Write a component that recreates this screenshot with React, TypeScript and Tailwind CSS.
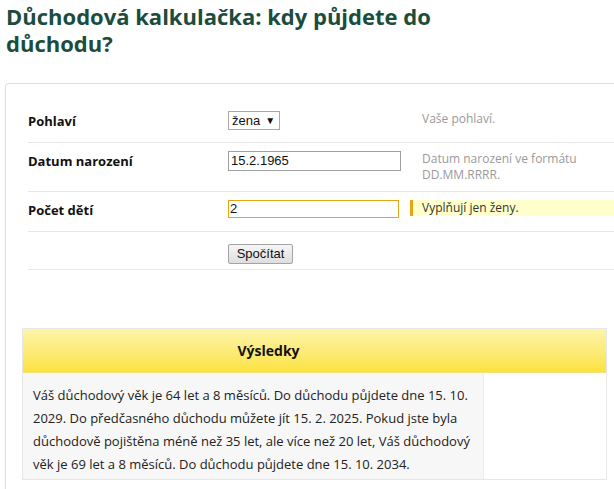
const sans = "font-['Open_Sans','Liberation_Sans',sans-serif]";
const arial = "font-['Liberation_Sans',Arial,sans-serif]";

function Row({
  label,
  children,
  help,
  highlight,
  className,
}: {
  label?: string;
  children: React.ReactNode;
  help?: React.ReactNode;
  highlight?: boolean;
  className: string;
}) {
  return (
    <div className={["grid grid-cols-[200px_182px_1fr] border-b border-[#e6e6e6]", className].join(" ")}>
      <div className="text-[13px] font-bold leading-[20px] text-[#111]">{label}</div>
      <div>{children}</div>
      <div>
        {help && (
          <div
            className={[
              "border-l-[3px] pl-[9px] text-[12px] leading-[16px]",
              highlight ? "border-[#e8a317] bg-[#ffffcc] text-[#333]" : "border-transparent text-[#9a9a9a]",
            ].join(" ")}
          >
            {help}
          </div>
        )}
      </div>
    </div>
  );
}

export default function App() {
  return (
    <div className={["h-[489px] w-[614px] overflow-hidden bg-white", sans].join(" ")}>
      <h1 className="px-[6px] pt-[3px] text-[22px] font-bold leading-[27px] text-[#1b4d3e]">
        Důchodová kalkulačka: kdy půjdete do
        <br />
        důchodu?
      </h1>

      <div className="ml-[5px] mt-[26px] h-[420px] w-[640px] rounded-tl-[4px] border-l border-t border-[#dddddd] pl-[22px] pt-[17px]">
        <Row label="Pohlaví" help="Vaše pohlaví." className="h-[42px] pt-[10px]">
          <div
            className={[
              "flex h-[19px] w-[52px] items-center gap-[5px] border border-[#a9a9a9] bg-white pl-[3px] text-[13px] text-[#111]",
              arial,
            ].join(" ")}
          >
            <span>žena</span>
            <span className="text-[10px]">▼</span>
          </div>
        </Row>

        <Row
          label="Datum narození"
          help={
            <>
              Datum narození ve formátu
              <br />
              DD.MM.RRRR.
            </>
          }
          className="h-[49px] pt-[8px]"
        >
          <div
            className={[
              "flex h-[20px] w-[173px] items-center border border-[#a0a0a0] bg-white pl-[2px] text-[13px] text-[#111]",
              arial,
            ].join(" ")}
          >
            15.2.1965
          </div>
        </Row>

        <Row label="Počet dětí" help="Vyplňují jen ženy." highlight className="h-[40px] pt-[8px]">
          <div
            className={[
              "flex h-[18px] w-[171px] items-center border border-[#e8a317] bg-white pl-[1px] text-[13px] text-[#111]",
              arial,
            ].join(" ")}
          >
            2
          </div>
        </Row>

        <Row className="h-[38px] pt-[8px]">
          <button
            className={[
              "h-[20px] w-[65px] rounded-[2px] border border-[#a3a3a3] bg-gradient-to-b from-[#f6f6f6] to-[#dedede] text-[13px] leading-[18px] text-[#111]",
              arial,
            ].join(" ")}
          >
            Spočítat
          </button>
        </Row>

        <div className="-ml-[6px] mt-[58px] w-[585px] border border-[#e6e6e6]">
          <div className="flex h-[44px] items-center justify-center border-b border-[#f2e27a] bg-gradient-to-b from-[#fdf4a6] to-[#fbe239] pr-[92px] text-[14px] font-bold text-[#111]">
            Výsledky
          </div>
          <div className="flex">
            <div className="w-[460px] bg-[#f7f7f7] pb-[3px] pl-[10px] pr-[8px] pt-[11px] text-[13px] leading-[23px] text-[#222]">
              Váš důchodový věk je 64 let a 8 měsíců. Do důchodu půjdete dne 15. 10. 2029. Do předčasného důchodu
              můžete jít 15. 2. 2025. Pokud jste byla důchodově pojištěna méně než 35 let, ale více než 20 let, Váš
              důchodový věk je 69 let a 8 měsíců. Do důchodu půjdete dne 15. 10. 2034.
            </div>
            <div className="flex-1 border-l border-[#ececec] bg-white" />
          </div>
        </div>
      </div>
    </div>
  );
}
